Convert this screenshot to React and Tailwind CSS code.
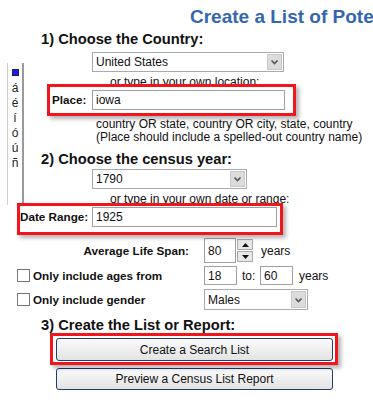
import React from 'react'

const Chevron = () => (
    <svg width="9" height="6" viewBox="0 0 9 6">
        <polyline points="1.5,1.5 4.5,4.5 7.5,1.5" fill="none" stroke="#555" strokeWidth="1.6" />
    </svg>
)

function Select({ value, className }) {
    return (
        <div className={"flex items-stretch border border-[#a7abb0] bg-white " + className}>
            <div className="flex-1 flex items-center pl-[3px] text-[12px] leading-[14px] whitespace-nowrap">{value}</div>
            <div className="w-[15px] m-[1px] flex items-center justify-center bg-[#dcdcdc] border border-[#c9c9c9]">
                <Chevron />
            </div>
        </div>
    )
}

function TextBox({ value, className }) {
    return (
        <div className={"flex items-center border border-[#a0a0a0] bg-white pl-[3px] text-[12px] leading-[14px] " + className}>
            {value}
        </div>
    )
}

function Box({ className, children }) {
    return (
        <div className={"relative border-[3px] border-[#f2161c] bg-white shadow-[3px_3px_4px_rgba(0,0,0,0.3)] " + className}>
            {children}
        </div>
    )
}

function Button({ label, className }) {
    return (
        <div className={"flex items-center justify-center rounded-[3px] border border-[#1f3e6c] bg-gradient-to-b from-[#fbfbfb] to-[#e3e3e3] text-[12px] leading-[14px] text-[#111] " + className}>
            {label}
        </div>
    )
}

const Check = () => <div className="w-[13px] h-[13px] border border-[#777] bg-white shrink-0" />

export default function App() {
    const accents = ['á', 'é', 'í', 'ó', 'ú', 'ñ']
    return (
        <div className="relative w-[373px] h-[409px] overflow-hidden bg-white font-['Liberation_Sans',Arial,sans-serif] text-[#111]">
            {/* floating accent palette */}
            <div className="absolute left-[7px] top-[63px] w-[17px] h-[142px] border-l border-l-[#cfcfcf] border-r-2 border-r-[#9a9a9a] flex flex-col items-center pt-[6px]">
                <div className="w-[7px] h-[7px] bg-[#1a1aff] border border-[#223]" />
                <div className="mt-[5px] flex flex-col items-center">
                    {accents.map((a) => (
                        <div key={a} className="h-[15px] leading-[15px] text-[12px] text-[#222]">{a}</div>
                    ))}
                </div>
            </div>

            <div className="h-[30px] pt-[6px] pl-[190px] whitespace-nowrap text-[19px] leading-[22px] font-bold text-[#3466b0]">
                Create a List of Potential Ancestors
            </div>

            <div className="h-[18px] pl-[41px] text-[14.7px] leading-[18px] font-bold">1) Choose the Country:</div>
            <Select value="United States" className="mt-[4px] ml-[92px] w-[192px] h-[20px]" />
            <div className="mt-[3px] h-[14px] pl-[110px] text-[12px] leading-[14px] whitespace-nowrap">or type in your own location:</div>

            <Box className="-mt-[5px] ml-[47px] w-[249px] h-[32px] pt-[3px] flex items-start">
                <div className="w-[42px] h-[20px] pl-[2px] flex items-center text-[11.7px] font-bold">Place:</div>
                <TextBox value="iowa" className="w-[193px] h-[20px]" />
            </Box>

            <div className="mt-[2px] pl-[96px] text-[12px] leading-[13px] whitespace-nowrap">
                <div>country OR state, country OR city, state, country</div>
                <div>(Place should include a spelled-out country name)</div>
            </div>

            <div className="mt-[6px] h-[18px] pl-[41px] text-[14.7px] leading-[18px] font-bold">2) Choose the census year:</div>
            <Select value="1790" className="mt-[1px] ml-[92px] w-[155px] h-[20px]" />
            <div className="mt-[3px] h-[14px] pl-[110px] text-[12px] leading-[14px] whitespace-nowrap">or type in your own date or range:</div>

            <Box className="-mt-[3px] ml-[17px] w-[266px] h-[32px] pt-[1px] flex items-start">
                <div className="w-[72px] h-[20px] flex items-center text-[11.7px] font-bold">Date Range:</div>
                <TextBox value="1925" className="w-[185px] h-[20px]" />
            </Box>

            <div className="mt-[3px] h-[25px] flex items-stretch">
                <div className="w-[204px] pr-[15px] flex items-center justify-end text-[11.7px] font-bold">Average Life Span:</div>
                <TextBox value="80" className="w-[32px]" />
                <div className="ml-[1px] w-[16px] flex flex-col gap-[1px] py-[1px]">
                    <div className="flex-1 flex items-center justify-center bg-[#e8e8e8] border border-[#a9a9a9]">
                        <svg width="7" height="4" viewBox="0 0 7 4"><polygon points="3.5,0 7,4 0,4" fill="#111" /></svg>
                    </div>
                    <div className="flex-1 flex items-center justify-center bg-[#e8e8e8] border border-[#a9a9a9]">
                        <svg width="7" height="4" viewBox="0 0 7 4"><polygon points="0,0 7,0 3.5,4" fill="#111" /></svg>
                    </div>
                </div>
                <div className="ml-[8px] flex items-center text-[12px]">years</div>
            </div>

            <div className="mt-[3px] h-[19px] flex items-stretch">
                <div className="w-[204px] pl-[17px] flex items-center">
                    <Check />
                    <span className="ml-[3px] text-[11.7px] font-bold whitespace-nowrap">Only include ages from</span>
                </div>
                <TextBox value="18" className="w-[33px]" />
                <div className="ml-[5px] w-[18px] flex items-center text-[12px]">to:</div>
                <TextBox value="60" className="w-[33px]" />
                <div className="ml-[6px] flex items-center text-[12px]">years</div>
            </div>

            <div className="mt-[4px] h-[21px] flex items-stretch">
                <div className="w-[204px] pl-[17px] flex items-center">
                    <Check />
                    <span className="ml-[3px] text-[11.7px] font-bold whitespace-nowrap">Only include gender</span>
                </div>
                <Select value="Males" className="w-[104px]" />
            </div>

            <div className="mt-[8px] h-[15px] pl-[41px] text-[14.7px] leading-[15px] font-bold">3) Create the List or Report:</div>

            <Box className="ml-[50px] w-[288px] h-[32px] pt-[2px] pl-[3px]">
                <Button label="Create a Search List" className="w-[277px] h-[23px]" />
            </Box>
            <Button label="Preview a Census List Report" className="mt-[3px] ml-[56px] w-[277px] h-[22px]" />
        </div>
    )
}
